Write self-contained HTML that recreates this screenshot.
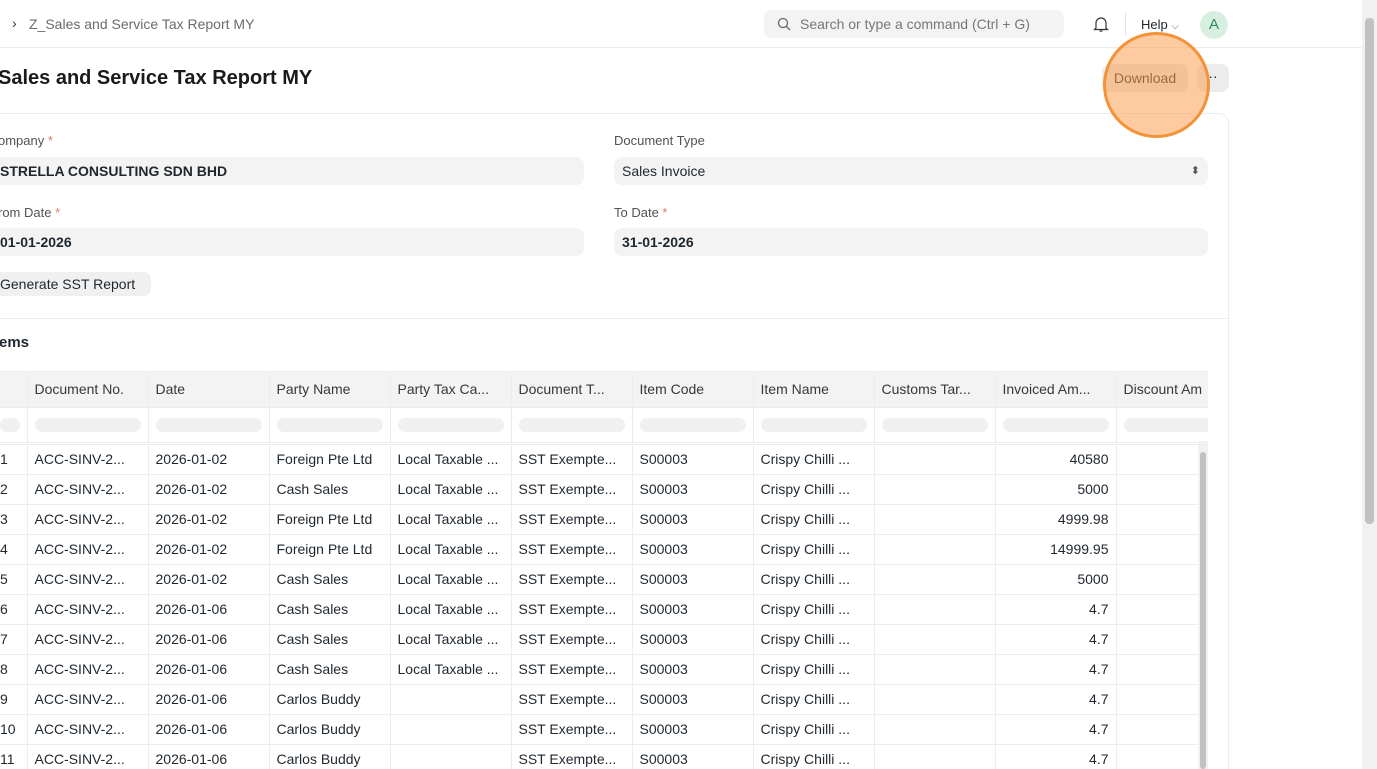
<!DOCTYPE html>
<html><head><style>
*{box-sizing:border-box;margin:0;padding:0}
html,body{width:1377px;height:769px;overflow:hidden}
body{background:#fff;font-family:"Liberation Sans",sans-serif;color:#1f272e;position:relative}
.abs{position:absolute}
.nav{left:0;top:0;width:1362px;height:48px;border-bottom:1px solid #ededed}
.inp{background:#f3f3f3;border-radius:8px;height:28px;font-size:14px;padding:0 8px;line-height:28px;font-weight:bold;color:#1f272e}
.lbl{font-size:13px;color:#525252}
.req{color:#e0796d}
table{border-collapse:collapse;font-size:14px;table-layout:fixed}
td{border-right:1px solid #ededed;border-bottom:1px solid #ededed;height:30px;padding:0 7px;white-space:nowrap;overflow:hidden;color:#1f272e}
tr.h td{background:#f3f3f3;height:35px;color:#383838}
tr.f td{height:35px}
.pill{height:14px;background:#f0f0f0;border-radius:7px}
.r{text-align:right}
</style></head><body>
<div class="abs nav"></div>
<div class="abs" style="left:12px;top:15px;font-size:14px;color:#333">›</div>
<div class="abs" style="left:29px;top:16px;font-size:14px;color:#6b6b6b">Z_Sales and Service Tax Report MY</div>
<div class="abs" style="left:764px;top:10px;width:300px;height:28px;background:#f3f3f3;border-radius:8px"></div>
<svg class="abs" style="left:777px;top:17px" width="14" height="14" viewBox="0 0 14 14"><circle cx="6" cy="6" r="4.5" fill="none" stroke="#666" stroke-width="1.3"/><path d="M9.5 9.5L13 13" stroke="#666" stroke-width="1.3"/></svg>
<div class="abs" style="left:800px;top:16px;font-size:14px;color:#777">Search or type a command (Ctrl + G)</div>
<svg class="abs" style="left:1093px;top:15px" width="16" height="18" viewBox="0 0 16 18"><path d="M3 13V8a5 5 0 0 1 10 0v5l1.5 1.5h-13z M6.5 16h3" fill="none" stroke="#333" stroke-width="1.2"/></svg>
<div class="abs" style="left:1125px;top:12px;width:1px;height:24px;background:#e2e2e2"></div>
<div class="abs" style="left:1141px;top:17px;font-size:13px">Help <span style="font-size:10px;color:#666">⌵</span></div>
<div class="abs" style="left:1200px;top:11px;width:28px;height:28px;border-radius:50%;background:#d6efe1;color:#2f8a5b;font-size:15px;text-align:center;line-height:28px">A</div>
<div class="abs" style="left:1362px;top:0;width:15px;height:769px;background:#f1f1f1"></div>
<div class="abs" style="left:1365px;top:18px;width:9px;height:506px;background:#c1c1c1;border-radius:4px"></div>
<div class="abs" style="left:-2px;top:67px;font-size:20px;font-weight:bold;color:#1a1a1a">Sales and Service Tax Report MY</div>
<div class="abs" style="left:1102px;top:64px;width:86px;height:28px;background:#ececec;border-radius:8px;font-size:14px;line-height:28px;text-align:center">Download</div>
<div class="abs" style="left:1197px;top:64px;width:32px;height:28px;background:#ececec;border-radius:8px;font-size:14px;line-height:24px;text-align:center">··</div>
<div class="abs" style="left:-10px;top:113px;width:1239px;height:680px;border:1px solid #ededed;border-radius:10px"></div>
<div class="abs lbl" style="left:-2px;top:133px">ompany <span class="req">*</span></div>
<div class="abs inp" style="left:-8px;top:157px;width:592px">STRELLA CONSULTING SDN BHD</div>
<div class="abs lbl" style="left:614px;top:133px">Document Type</div>
<div class="abs inp" style="left:614px;top:157px;width:594px;font-weight:normal">Sales Invoice<span style="float:right;font-size:11px;color:#555">⬍</span></div>
<div class="abs lbl" style="left:-2px;top:205px">rom Date <span class="req">*</span></div>
<div class="abs inp" style="left:-8px;top:228px;width:592px">01-01-2026</div>
<div class="abs lbl" style="left:614px;top:205px">To Date <span class="req">*</span></div>
<div class="abs inp" style="left:614px;top:228px;width:594px">31-01-2026</div>
<div class="abs" style="left:-8px;top:272px;width:159px;height:24px;background:#f0f0f0;border-radius:7px;font-size:14px;line-height:24px;padding-left:8px">Generate SST Report</div>
<div class="abs" style="left:0;top:318px;width:1228px;height:1px;background:#ededed"></div>
<div class="abs" style="left:-1px;top:334px;font-size:15px;font-weight:bold">ems</div>
<div class="abs" style="left:0;top:371px;width:1208px;height:398px;overflow:hidden;border-top:1px solid #ededed">
<table style="width:1250px"><colgroup><col style="width:27px"><col style="width:121px"><col style="width:121px"><col style="width:121px"><col style="width:121px"><col style="width:121px"><col style="width:121px"><col style="width:121px"><col style="width:121px"><col style="width:121px"><col style="width:134px"></colgroup>
<tr class="h"><td></td><td>Document No.</td><td>Date</td><td>Party Name</td><td>Party Tax Ca...</td><td>Document T...</td><td>Item Code</td><td>Item Name</td><td>Customs Tar...</td><td>Invoiced Am...</td><td>Discount Am</td></tr>
<tr class="f"><td style="padding:0"><div class="pill" style="width:20px"></div></td><td><div class="pill"></div></td><td><div class="pill"></div></td><td><div class="pill"></div></td><td><div class="pill"></div></td><td><div class="pill"></div></td><td><div class="pill"></div></td><td><div class="pill"></div></td><td><div class="pill"></div></td><td><div class="pill"></div></td><td><div class="pill"></div></td></tr>
<tr><td style="padding:0;height:2px" colspan="11"></td></tr>
<tr><td style="padding-left:0">1</td><td>ACC-SINV-2...</td><td>2026-01-02</td><td>Foreign Pte Ltd</td><td>Local Taxable ...</td><td>SST Exempte...</td><td>S00003</td><td>Crispy Chilli ...</td><td></td><td class="r">40580</td><td></td></tr>
<tr><td style="padding-left:0">2</td><td>ACC-SINV-2...</td><td>2026-01-02</td><td>Cash Sales</td><td>Local Taxable ...</td><td>SST Exempte...</td><td>S00003</td><td>Crispy Chilli ...</td><td></td><td class="r">5000</td><td></td></tr>
<tr><td style="padding-left:0">3</td><td>ACC-SINV-2...</td><td>2026-01-02</td><td>Foreign Pte Ltd</td><td>Local Taxable ...</td><td>SST Exempte...</td><td>S00003</td><td>Crispy Chilli ...</td><td></td><td class="r">4999.98</td><td></td></tr>
<tr><td style="padding-left:0">4</td><td>ACC-SINV-2...</td><td>2026-01-02</td><td>Foreign Pte Ltd</td><td>Local Taxable ...</td><td>SST Exempte...</td><td>S00003</td><td>Crispy Chilli ...</td><td></td><td class="r">14999.95</td><td></td></tr>
<tr><td style="padding-left:0">5</td><td>ACC-SINV-2...</td><td>2026-01-02</td><td>Cash Sales</td><td>Local Taxable ...</td><td>SST Exempte...</td><td>S00003</td><td>Crispy Chilli ...</td><td></td><td class="r">5000</td><td></td></tr>
<tr><td style="padding-left:0">6</td><td>ACC-SINV-2...</td><td>2026-01-06</td><td>Cash Sales</td><td>Local Taxable ...</td><td>SST Exempte...</td><td>S00003</td><td>Crispy Chilli ...</td><td></td><td class="r">4.7</td><td></td></tr>
<tr><td style="padding-left:0">7</td><td>ACC-SINV-2...</td><td>2026-01-06</td><td>Cash Sales</td><td>Local Taxable ...</td><td>SST Exempte...</td><td>S00003</td><td>Crispy Chilli ...</td><td></td><td class="r">4.7</td><td></td></tr>
<tr><td style="padding-left:0">8</td><td>ACC-SINV-2...</td><td>2026-01-06</td><td>Cash Sales</td><td>Local Taxable ...</td><td>SST Exempte...</td><td>S00003</td><td>Crispy Chilli ...</td><td></td><td class="r">4.7</td><td></td></tr>
<tr><td style="padding-left:0">9</td><td>ACC-SINV-2...</td><td>2026-01-06</td><td>Carlos Buddy</td><td></td><td>SST Exempte...</td><td>S00003</td><td>Crispy Chilli ...</td><td></td><td class="r">4.7</td><td></td></tr>
<tr><td style="padding-left:0">10</td><td>ACC-SINV-2...</td><td>2026-01-06</td><td>Carlos Buddy</td><td></td><td>SST Exempte...</td><td>S00003</td><td>Crispy Chilli ...</td><td></td><td class="r">4.7</td><td></td></tr>
<tr><td style="padding-left:0">11</td><td>ACC-SINV-2...</td><td>2026-01-06</td><td>Carlos Buddy</td><td></td><td>SST Exempte...</td><td>S00003</td><td>Crispy Chilli ...</td><td></td><td class="r">4.7</td><td></td></tr>
</table></div>
<div class="abs" style="left:1198px;top:441px;width:10px;height:328px;background:#f1f1f1"></div>
<div class="abs" style="left:1200px;top:452px;width:6px;height:317px;background:#c1c1c1;border-radius:3px"></div>
<div class="abs" style="left:1103px;top:32px;width:107px;height:106px;border-radius:50%;background:rgba(251,160,80,0.55);border:3px solid #f4923a"></div>
</body></html>
